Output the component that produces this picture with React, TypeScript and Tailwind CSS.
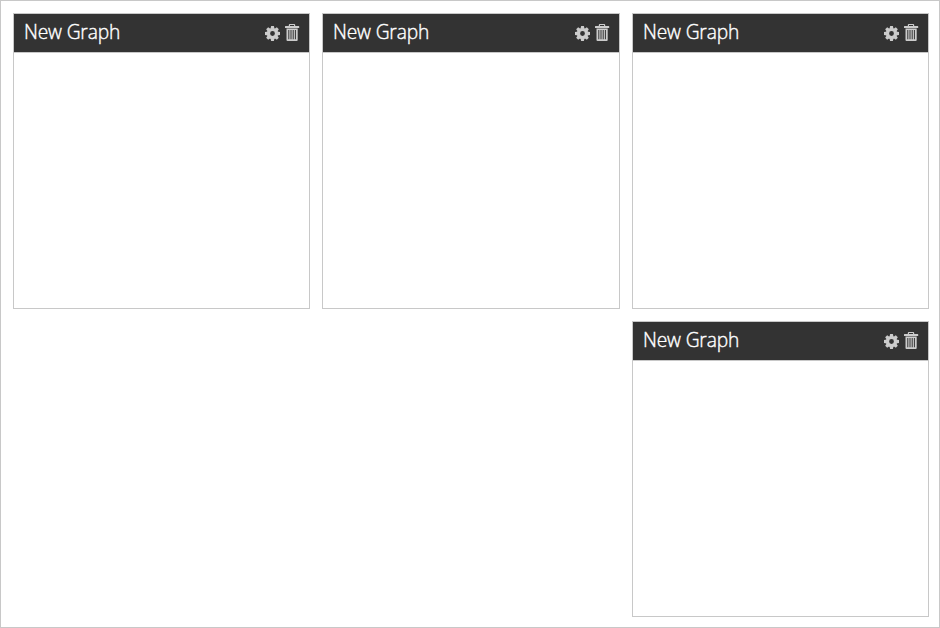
const teeth = [0, 45, 90, 135, 180, 225, 270, 315];

function Gear() {
  return (
    <svg width="15" height="15" viewBox="0 0 15 15" fill="#ccc" className="shrink-0">
      {teeth.map((angle) => (
        <path key={angle} d="M5.5 3L6.1 0h2.8l.6 3z" transform={`rotate(${angle} 7.5 7.5)`} />
      ))}
      <circle cx="7.5" cy="7.5" r="4" fill="none" stroke="#ccc" strokeWidth="3.2" />
    </svg>
  );
}

function Trash() {
  return (
    <svg width="15" height="17" viewBox="0 0 15 17" fill="#ccc" fillRule="evenodd" className="shrink-0">
      <path d="M3.8 2V1q0-1 1-1h4.4q1 0 1 1v1h3.5q.5 0 .5.5V4H0V2.5Q0 2 .5 2zM5 1.1V2h4v-.9zM1.5 4.6h11.2V16q0 1-1 1H2.5q-1 0-1-1zM3.3 6v9.2h1V6zM5.5 6v9.2h1V6zM7.7 6v9.2h1V6zM9.9 6v9.2h1V6z" />
    </svg>
  );
}

function Graph({ className = "" }: { className?: string }) {
  return (
    <section className={`border border-[#c8c8c8] bg-white ${className}`}>
      <header className="flex h-[39px] items-start justify-between border-b border-[#c8c8c8] bg-[#333] pl-[10px] pr-[9px]">
        <h2 className="text-[19.2px] font-light leading-[36px] tracking-[-0.15px] text-white [-webkit-text-stroke:0.4px_white]">New Graph</h2>
        <div className="flex items-start gap-[5px] pt-[10px]">
          <div className="pt-[2px]">
            <Gear />
          </div>
          <Trash />
        </div>
      </header>
    </section>
  );
}

export default function App() {
  return (
    <main className="grid h-[628px] w-[940px] grid-cols-[297px_298px_297px] grid-rows-[296px_296px] gap-x-3 gap-y-3 border border-[#c8c8c8] bg-white pl-3 pt-3 font-['Open_Sans',sans-serif]">
      <Graph />
      <Graph />
      <Graph />
      <Graph className="col-start-3" />
    </main>
  );
}
